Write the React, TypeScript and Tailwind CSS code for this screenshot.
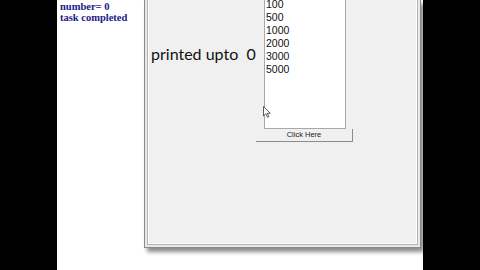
import React from "react";

const amounts = ["100", "500", "1000", "2000", "3000", "5000"];

function Cursor() {
  return (
    <svg
      className="absolute left-[114px] top-[106px]"
      width="8"
      height="12"
      viewBox="0 0 8 12"
    >
      <path
        d="M0.5 0.5 L0.5 10 L2.8 7.8 L4.5 11.3 L5.9 10.6 L4.2 7.3 L7.3 7.3 Z"
        fill="#fff"
        stroke="#333"
        strokeWidth="0.8"
      />
    </svg>
  );
}

export default function App() {
  return (
    <div className="flex w-[480px] h-[270px] overflow-hidden bg-black">
      <div className="w-[57px] shrink-0 bg-black" />

      <div className="flex w-[366px] shrink-0 bg-white">
        {/* console output */}
        <div className="w-[87px] shrink-0 pl-[3px] pt-[1px] font-['Liberation_Serif',serif] text-[10.5px] font-bold leading-[11px] text-[#1a1a88]">
          <div>number= 0</div>
          <div>task completed</div>
        </div>

        {/* window */}
        <div className="w-[277px] h-[248px] shrink-0 border-x border-b border-[#8a8a8a] bg-[#e8e8e8] px-[2px] pb-[2px] shadow-[3px_4px_4px_rgba(0,0,0,0.45)]">
          <div className="h-full border-x border-b border-[#b4b4b4] bg-white pr-[1px] pb-[1px] pl-[1px]">
            <div className="relative h-full bg-[#f0f0f0]">
              <div className="flex">
                <div className="w-[115px] shrink-0 pl-[2px] pt-[43px] font-['Lato',sans-serif] text-[16px] leading-[22px] text-[#111] whitespace-pre">
                  printed upto  0
                </div>
                <div className="w-[82px] h-[129px] shrink-0 border-x border-b border-[#a8a8a8] bg-white pl-[1px] font-['Liberation_Sans',sans-serif] text-[10.5px] leading-[13px] text-[#111]">
                  <div className="-mt-[2px]">
                    {amounts.map((a) => (
                      <div key={a}>{a}</div>
                    ))}
                  </div>
                </div>
              </div>
              <div className="ml-[107px] flex h-[13px] w-[97px] items-center justify-center border-r border-b border-[#8c8c8c] bg-[#f0f0f0] font-['Liberation_Sans',sans-serif] text-[7.5px] text-[#222]">
                Click Here
              </div>
              <Cursor />
            </div>
          </div>
        </div>
      </div>

      <div className="flex-1 bg-black" />
    </div>
  );
}
